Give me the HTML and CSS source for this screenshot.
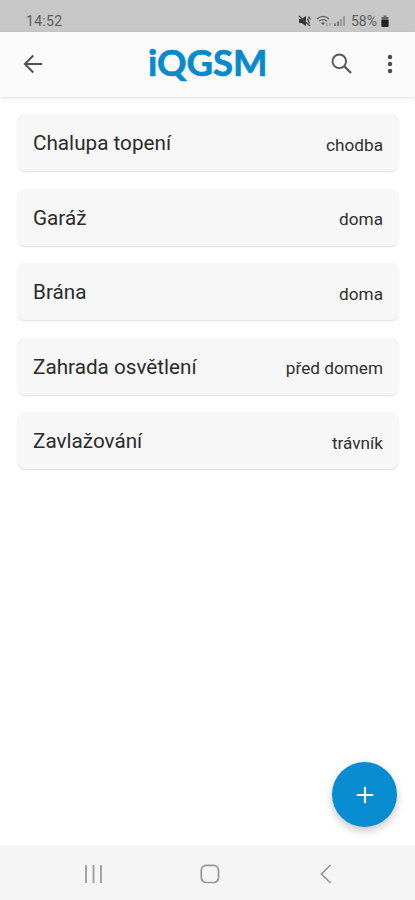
FILE: index.html
```html
<!DOCTYPE html>
<html lang="cs">
<head>
<meta charset="utf-8">
<meta name="viewport" content="width=device-width, initial-scale=1">
<title>iQGSM</title>
<link rel="stylesheet" href="styles.css">
</head>
<body>
<div class="screen">
  <div class="status">
    <span class="time">14:52</span>
    <div class="indicators">
      <svg class="mute" width="14" height="12" viewBox="0 0 14 12"><path d="M1 4h2.500L8 1v10L3.500 8H1z" fill="#333"/><path d="M1 1l11 10M9.500 3.500l2 5M10.500 1.500l2 3" stroke="#444" stroke-width="1.300" fill="none"/></svg>
      <svg class="wifi" width="16" height="12" viewBox="0 0 16 12" fill="none" stroke="#606060" stroke-width="1.200"><path d="M1 4Q7 -1.200 13 4M3 6.200Q7 3 11 6.200"/><path d="M5 8Q7 6.500 9 8L7 10z" fill="#606060" stroke="none"/><path d="M11 8v3M14 8v3" stroke="#999"/></svg>
      <svg class="signal" width="12" height="12" viewBox="0 0 12 12"><path d="M0 8.500h2V11H0zM3 6.500h2V11H3z" fill="#777"/><path d="M6 4h2v7H6zM9 1h2v10H9z" fill="#999"/></svg>
      <span class="percent">58%</span>
      <svg class="battery" width="8" height="12" viewBox="0 0 8 12"><path d="M2.500 .5h3v1.500h2V11a1 1 0 0 1-1 1h-5a1 1 0 0 1-1-1V2h2z" fill="#666"/><path d="M.5 5h7v6a1 1 0 0 1-1 1h-5a1 1 0 0 1-1-1z" fill="#222"/></svg>
    </div>
  </div>
  <header class="bar">
    <svg class="back" width="20" height="20" viewBox="0 0 20 20" fill="none" stroke="#505050" stroke-width="1.900"><path d="M19 10H2M10.300 1.500L1.800 10l8.500 8.500"/></svg>
    <h1 class="logo">iQGSM</h1>
    <svg class="search" width="22" height="22" viewBox="0 0 22 22" fill="none" stroke="#575757"><circle cx="8.300" cy="8.300" r="6.800" stroke-width="1.900"/><path d="M13.300 13.300l6.700 6.700" stroke-width="2.300"/></svg>
    <svg class="more" width="6" height="20" viewBox="0 0 6 20" fill="#4c4c4c"><circle cx="3" cy="3" r="2.200"/><circle cx="3" cy="10" r="2.200"/><circle cx="3" cy="17" r="2.200"/></svg>
  </header>
  <main class="list">
    <div class="card"><span class="name">Chalupa topení</span><span class="place">chodba</span></div>
    <div class="card"><span class="name">Garáž</span><span class="place">doma</span></div>
    <div class="card"><span class="name">Brána</span><span class="place">doma</span></div>
    <div class="card"><span class="name">Zahrada osvětlení</span><span class="place">před domem</span></div>
    <div class="card"><span class="name">Zavlažování</span><span class="place">trávník</span></div>
  </main>
  <button class="fab" aria-label="Přidat"><svg width="18" height="18" viewBox="0 0 18 18" stroke="#fff" stroke-width="2.200"><path d="M9 .7v16.600M.7 9h16.600"/></svg></button>
  <nav class="nav">
    <svg class="recents" width="20" height="20" viewBox="0 0 20 20" stroke="#a0a0a0" stroke-width="1.900"><path d="M2 1v18M9.500 1v18M17 1v18"/></svg>
    <svg class="home" width="20" height="20" viewBox="0 0 20 20" fill="none" stroke="#969696" stroke-width="1.700"><rect x="1.300" y="1.300" width="17.200" height="17.200" rx="5"/></svg>
    <svg class="prev" width="12" height="20" viewBox="0 0 12 20" fill="none" stroke="#969696" stroke-width="1.700"><path d="M10.500 1L1.500 10l9 9"/></svg>
  </nav>
</div>
</body>
</html>
```
FILE: styles.css
```css
* { box-sizing: border-box; }
body { margin: 0; background: #fff; font-family: Roboto, sans-serif; }
svg { display: block; flex: none; }
.screen { position: relative; display: flex; flex-direction: column; height: 900px; width: 415px; overflow: hidden; }
.status { display: flex; justify-content: space-between; height: 32px; padding: 10px 25px 0 26px; background: #c7c7c7; color: #5b5b5b; font-size: 14px; line-height: 22px; }
.time { letter-spacing: 0.300px; }
.indicators { display: flex; height: 22px; align-items: center; }
.wifi { margin-left: 4px; }
.signal { margin-left: 2px; }
.percent { margin-left: 5px; width: 28px; }
.battery { margin-left: 2px; margin-right: 1px; }
.bar { display: flex; align-items: center; height: 65px; padding: 0 22px 1px 23px; background: #fbfbfb; box-shadow: 0 1px 3px rgba(0, 0, 0, 0.140); }
.logo { margin: 0 0 4px 105px; width: 122px; color: #078acb; font: 700 36.500px/50px Lato, sans-serif; -webkit-text-stroke: 0.700px #078acb; }
.search { margin-left: 61px; }
.more { margin-left: auto; }
.list { display: flex; flex-direction: column; gap: 17.500px; flex: 1; padding: 17px 17px 0 18px; }
.card { display: flex; align-items: center; justify-content: space-between; height: 57px; padding: 1px 15px 0; border-radius: 7px; background: #f7f7f7; box-shadow: 0 1px 2px rgba(0, 0, 0, 0.130); }
.name { color: #2b2b2b; font-size: 20.700px; }
.place { color: #303030; font-size: 17.200px; padding-top: 3px; }
.fab { position: absolute; left: 332px; top: 762px; display: flex; align-items: center; justify-content: center; width: 65px; height: 65px; padding: 0; border: 0; border-radius: 50%; background: #078bd1; box-shadow: 0 4px 8px rgba(0, 0, 0, 0.220); }
.nav { display: flex; align-items: center; height: 55px; padding: 2px 83px 0 84px; justify-content: space-between; background: #f5f5f5; }
.home { margin-left: -5px; }
```
